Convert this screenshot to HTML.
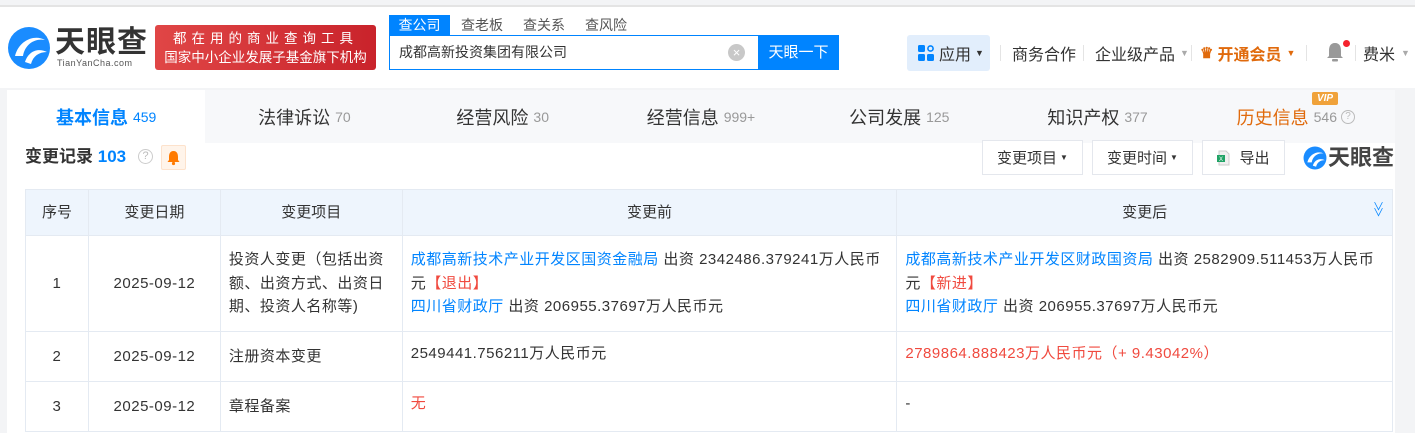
<!DOCTYPE html>
<html style="width:1415px;height:433px;overflow:hidden"><head><meta charset="utf-8"><style>
*{box-sizing:border-box;margin:0;padding:0}
body{width:1415px;height:433px;overflow:hidden;background:#f3f4f6;font-family:"Liberation Sans","Noto Sans CJK SC",sans-serif;color:#333;position:relative}
.abs{position:absolute}
.hdr{left:0;top:5px;width:1415px;height:83px;background:#fff;border-top:2px solid #e4e4e4}
.main{left:7px;top:90px;width:1388px;height:343px;background:#fff}
.tabs{left:7px;top:90px;width:1388px;height:53px;background:#f7f8fa;display:flex}
.tab{flex:1;display:flex;align-items:center;justify-content:center;font-size:18px;color:#333}
.tab small{font-size:14px;color:#999;margin-left:5px}
.tab.act{background:#fff;color:#0084ff;font-weight:bold}
.tab.act small{color:#0084ff;font-weight:normal}
table{position:absolute;left:25px;top:189px;width:1368px;border-collapse:collapse;font-size:15px}
td,th{border:1px solid #e4eaf2;font-weight:normal;line-height:23.5px;vertical-align:middle}
th{background:#eef5fd;height:46px;font-size:15px}
td{padding:0 8px;letter-spacing:.5px}
.c{text-align:center}
.bl{color:#0084ff}.rd{color:#f04a3f}
.btn{top:140px;height:35px;border:1px solid #e4e7ed;background:#fff;font-size:15px;display:flex;align-items:center;justify-content:center}
.nav{top:35px;height:36px;font-size:16px;display:flex;align-items:center}
.sep{width:1px;height:16px;background:#e4e4e4;top:45px}
</style></head><body>
<div class="abs hdr"></div>
<svg class="abs" style="left:7px;top:26px" width="44" height="44" viewBox="0 0 44 44"><circle cx="22" cy="22" r="21" fill="#1a8cff"/><path d="M8 30 C12 14 28 8 38 14 C28 12 18 18 16 30 Z" fill="#fff"/><path d="M18 36 C22 24 32 22 40 26 C32 26 26 30 24 38 Z" fill="#fff"/></svg>
<div class="abs" style="left:55px;top:27px;font-size:30px;font-weight:bold;color:#333;letter-spacing:1px;line-height:32px">天眼查</div>
<div class="abs" style="left:57px;top:58px;font-size:9px;color:#555;letter-spacing:.5px">TianYanCha.com</div>
<div class="abs" style="left:155px;top:25px;width:221px;height:45px;background:linear-gradient(90deg,#e04646,#c9232b);border-radius:3px;color:#fff;font-size:13.5px;line-height:19px;text-align:center;padding-top:4px"><div style="letter-spacing:5px">都在用的商业查询工具</div><div>国家中小企业发展子基金旗下机构</div></div>
<div class="abs" style="left:389px;top:15px;width:61px;height:21px;background:#0084ff;color:#fff;font-size:14px;text-align:center;line-height:21px">查公司</div>
<div class="abs" style="left:461px;top:15px;font-size:14px;color:#555;line-height:21px">查老板</div>
<div class="abs" style="left:523px;top:15px;font-size:14px;color:#555;line-height:21px">查关系</div>
<div class="abs" style="left:585px;top:15px;font-size:14px;color:#555;line-height:21px">查风险</div>
<div class="abs" style="left:389px;top:35px;width:450px;height:35px;border:1px solid #0084ff;background:#fff"></div>
<div class="abs" style="left:399px;top:35px;line-height:35px;font-size:14px;color:#333">成都高新投资集团有限公司</div>
<div class="abs" style="left:728px;top:44px;width:17px;height:17px;border-radius:50%;background:#c8c8c8;color:#fff;font-size:13px;line-height:17px;text-align:center">×</div>
<div class="abs" style="left:758px;top:35px;width:81px;height:35px;background:#0084ff;color:#fff;font-size:15px;text-align:center;line-height:35px">天眼一下</div>
<div class="abs nav" style="left:907px;width:83px;background:#e2eefc;border-radius:3px;padding-left:11px"><svg width="16" height="16" viewBox="0 0 16 16" style="margin-right:5px"><rect x="0" y="0" width="7" height="7" rx="1.5" fill="#0084ff"/><circle cx="12.5" cy="3.5" r="2.6" fill="none" stroke="#0084ff" stroke-width="1.6"/><rect x="0" y="9" width="7" height="7" rx="1.5" fill="#0084ff"/><rect x="9" y="9" width="7" height="7" rx="1.5" fill="#0084ff"/></svg>应用<span style="font-size:9px;margin-left:4px">▼</span></div>
<div class="abs sep" style="left:1000px"></div>
<div class="abs nav" style="left:1012px">商务合作</div>
<div class="abs sep" style="left:1083px"></div>
<div class="abs nav" style="left:1095px">企业级产品<span style="font-size:9px;color:#aaa;margin-left:5px">▼</span></div>
<div class="abs sep" style="left:1191px"></div>
<div class="abs nav" style="left:1200px;color:#e06a0c;font-weight:bold"><span style="font-size:15px;margin-right:4px">♛</span>开通会员<span style="font-size:9px;margin-left:5px">▼</span></div>
<div class="abs sep" style="left:1306px"></div>
<svg class="abs" style="left:1326px;top:42px" width="18" height="20" viewBox="0 0 18 20"><path d="M9 1 C4 1 3 5 3 9 L3 14 L1 16 L17 16 L15 14 L15 9 C15 5 14 1 9 1Z" fill="#999"/><rect x="6" y="17" width="6" height="2.5" rx="1" fill="#999"/></svg>
<div class="abs" style="left:1343px;top:40px;width:7px;height:7px;border-radius:50%;background:#f5222d"></div>
<div class="abs sep" style="left:1355px"></div>
<div class="abs nav" style="left:1363px">费米<span style="font-size:9px;color:#aaa;margin-left:6px">▼</span></div>
<div class="abs main"></div>
<div class="abs tabs">
<div class="tab act">基本信息<small>459</small></div>
<div class="tab">法律诉讼<small>70</small></div>
<div class="tab">经营风险<small>30</small></div>
<div class="tab">经营信息<small>999+</small></div>
<div class="tab">公司发展<small>125</small></div>
<div class="tab">知识产权<small>377</small></div>
<div class="tab" style="color:#e06a0c">历史信息<small>546</small><span style="display:inline-block;width:14px;height:14px;border:1px solid #bbb;border-radius:50%;font-size:10px;color:#bbb;text-align:center;line-height:12px;margin-left:4px">?</span></div>
</div>
<div class="abs" style="left:1312px;top:92px;width:26px;height:13px;background:#f0a23a;color:#fff;font-size:10px;font-weight:bold;font-style:italic;text-align:center;line-height:13px;border-radius:2px">VIP</div>
<div class="abs" style="left:25px;top:145px;font-size:17px;font-weight:bold;line-height:24px">变更记录 <span style="color:#0084ff">103</span></div>
<div class="abs" style="left:138px;top:149px;width:15px;height:15px;border:1px solid #ccc;border-radius:50%;font-size:11px;color:#bbb;text-align:center;line-height:13px">?</div>
<div class="abs" style="left:161px;top:145px;width:25px;height:25px;background:#fff4ea;border:1px solid #fde2cc;border-radius:2px"><svg width="23" height="23" viewBox="0 0 23 23"><path d="M11.5 5 C8 5 7 8 7 11 L7 14 L5.5 16 L17.5 16 L16 14 L16 11 C16 8 15 5 11.5 5Z" fill="#ff7a00"/><circle cx="11.5" cy="17.5" r="1.6" fill="#ff7a00"/></svg></div>
<div class="abs btn" style="left:982px;width:101px">变更项目<span style="font-size:8px;margin-left:3px">▼</span></div>
<div class="abs btn" style="left:1092px;width:101px">变更时间<span style="font-size:8px;margin-left:3px">▼</span></div>
<div class="abs btn" style="left:1202px;width:83px"><svg width="14" height="16" viewBox="0 0 14 16" style="margin-right:8px"><path d="M2 1h7l3 3v11H2z" fill="#f0f0f0" stroke="#ccc"/><rect x="0" y="5" width="8" height="7" fill="#21a366"/><text x="4" y="11" font-size="6" fill="#fff" text-anchor="middle" font-family="Liberation Sans">X</text></svg>导出</div>
<svg class="abs" style="left:1303px;top:146px" width="24" height="24" viewBox="0 0 44 44"><circle cx="22" cy="22" r="21" fill="#1a8cff"/><path d="M8 30 C12 14 28 8 38 14 C28 12 18 18 16 30 Z" fill="#fff"/><path d="M18 36 C22 24 32 22 40 26 C32 26 26 30 24 38 Z" fill="#fff"/></svg>
<div class="abs" style="left:1328px;top:144px;font-size:22px;font-weight:bold;color:#444;line-height:28px">天眼查</div>
<table>
<colgroup><col style="width:63px"><col style="width:132px"><col style="width:182px"><col style="width:495px"><col style="width:496px"></colgroup>
<tr><th>序号</th><th>变更日期</th><th>变更项目</th><th>变更前</th><th style="position:relative">变更后<span style="position:absolute;right:8px;top:14px;color:#0084ff;font-size:11px;line-height:6px">∨<br>∨</span></th></tr>
<tr style="height:96px"><td class="c">1</td><td class="c">2025-09-12</td><td>投资人变更（包括出资额、出资方式、出资日期、投资人名称等)</td>
<td><span class="bl">成都高新技术产业开发区国资金融局</span> 出资 2342486.379241万人民币元<span class="rd">【退出】</span><br><span class="bl">四川省财政厅</span> 出资 206955.37697万人民币元</td>
<td><span class="bl">成都高新技术产业开发区财政国资局</span> 出资 2582909.511453万人民币元<span class="rd">【新进】</span><br><span class="bl">四川省财政厅</span> 出资 206955.37697万人民币元</td></tr>
<tr style="height:50px"><td class="c">2</td><td class="c">2025-09-12</td><td>注册资本变更</td><td style="vertical-align:top;padding-top:10px">2549441.756211万人民币元</td><td class="rd" style="vertical-align:top;padding-top:10px">2789864.888423万人民币元（+ 9.43042%）</td></tr>
<tr style="height:50px"><td class="c">3</td><td class="c">2025-09-12</td><td>章程备案</td><td class="rd" style="vertical-align:top;padding-top:10px">无</td><td style="vertical-align:top;padding-top:10px">-</td></tr>
</table>
</body></html>
